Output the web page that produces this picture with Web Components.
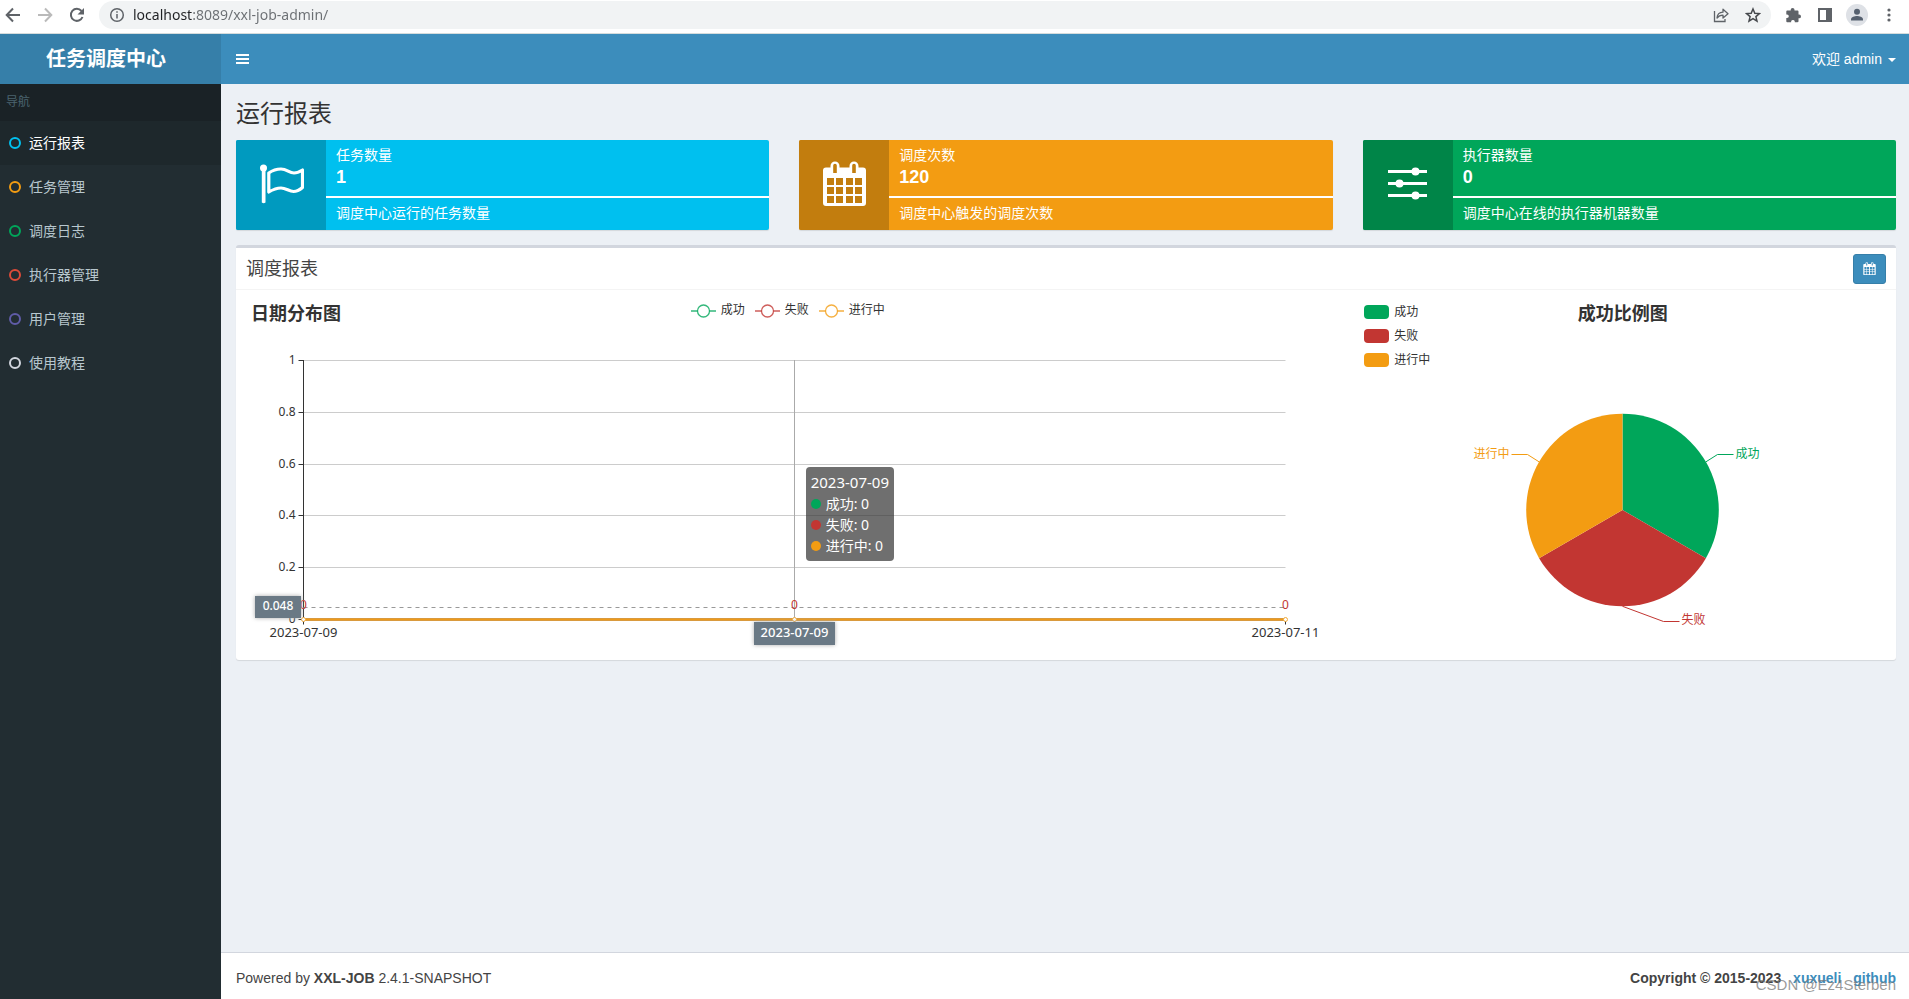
<!DOCTYPE html>
<html lang="zh-CN">
<head>
<meta charset="utf-8">
<title>任务调度中心</title>
<style>
  html, body { margin: 0; height: 100%; }
  body {
    font-family: "Liberation Sans", "Noto Sans CJK SC", sans-serif;
    font-size: 14px; line-height: 20px; color: #333; background: #ecf0f5;
    --cjk: "Noto Sans", "Noto Sans CJK SC", sans-serif;
  }
</style>
</head>
<body>
<app-page>
  <browser-bar slot="browser"></browser-bar>
  <app-header slot="header" brand="任务调度中心" user="欢迎 admin"></app-header>
  <side-nav slot="nav" heading="导航">
    <nav-item color="#00c0ef" active>运行报表</nav-item>
    <nav-item color="#f39c12">任务管理</nav-item>
    <nav-item color="#00a65a">调度日志</nav-item>
    <nav-item color="#dd4b39">执行器管理</nav-item>
    <nav-item color="#605ca8">用户管理</nav-item>
    <nav-item color="#d2d6de">使用教程</nav-item>
  </side-nav>
  <report-view heading="运行报表">
    <info-card slot="cards" icon="flag" color="#00c0ef" dark="#009abf" label="任务数量" value="1">调度中心运行的任务数量</info-card>
    <info-card slot="cards" icon="calendar" color="#f39c12" dark="#c27d0e" label="调度次数" value="120">调度中心触发的调度次数</info-card>
    <info-card slot="cards" icon="sliders" color="#00a65a" dark="#008548" label="执行器数量" value="0">调度中心在线的执行器机器数量</info-card>
    <chart-box heading="调度报表">
      <line-chart heading="日期分布图"></line-chart>
      <pie-chart heading="成功比例图"></pie-chart>
    </chart-box>
  </report-view>
  <app-footer slot="footer"></app-footer>
</app-page>

<script>
const define = (name, html, setup) => {
  const tpl = document.createElement('template');
  tpl.innerHTML = typeof html === 'string' ? html : '';
  customElements.define(name, class extends HTMLElement {
    connectedCallback() {
      if (this.shadowRoot) return;
      const root = this.attachShadow({ mode: 'open' });
      if (typeof html === 'function') root.innerHTML = html(this);
      else root.append(tpl.content.cloneNode(true));
      if (setup) setup(this, root);
    }
  });
};

const cells = [17, 26, 35].map(y => [5, 14, 24, 33].map(x => `M${x} ${y}h7v7h-7z`).join('')).join('');
const ICONS = {
  flag: `<svg viewBox="0 0 45 45" fill="#fff"><circle cx="4.500" cy="7" r="3.500"/><path d="M2.800 8h3.700v33.500q-1.800 1.500-3.700 0z"/><path fill="none" stroke="#fff" stroke-width="3.200" stroke-linejoin="round" d="M9.800 12C14 9 18 8 22 8c6 0 8 4 13 4 3 0 6-1.500 8.500-3v17.500c-3.500 3-6.500 4-9 4-4.500 0-7.500-3.500-12.500-3.500-4 0-8 1.500-12.200 4z"/></svg>`,
  calendar: `<svg viewBox="0 0 45 45" fill="#fff"><path fill-rule="evenodd" d="M4 6.500h4.500V5a4.500 4.500 0 0 1 9 0v1.500h10V5a4.500 4.500 0 0 1 9 0v1.500H41a3 3 0 0 1 3 3V42a3 3 0 0 1-3 3H4a3 3 0 0 1-3-3V9.500a3 3 0 0 1 3-3zM11.200 4.500V12h3.600V4.500a1.500 1.500 0 0 0-3.600 0zM30.200 4.500V12h3.600V4.500a1.500 1.500 0 0 0-3.600 0z${cells}"/></svg>`,
  sliders: `<svg viewBox="0 0 45 45" fill="#fff"><path d="M3 9h39v3H3zM3 21h39v3H3zM3 33h39v3H3z"/><circle cx="30.500" cy="10.500" r="4"/><circle cx="14.500" cy="22.500" r="4"/><circle cx="30.500" cy="34.500" r="4"/></svg>`
};
const SERIES = [['成功', '#00a65a'], ['失败', '#c23632'], ['进行中', '#f39c12']];

define('app-page', `
<style>
  :host { display: flex; flex-direction: column; min-height: 100vh; }
  .body { flex: 1; display: grid; grid-template-columns: 221px minmax(0, 1fr); }
  aside { background: #222d32; }
  main { display: flex; flex-direction: column; }
  .content { flex: 1; }
</style>
<slot name="browser"></slot>
<slot name="header"></slot>
<div class="body">
  <aside><slot name="nav"></slot></aside>
  <main><div class="content"><slot></slot></div><slot name="footer"></slot></main>
</div>`);

define('browser-bar', `
<style>
  :host { display: flex; gap: 16px; height: 32px; padding: 1px 12px 0 5px; background: #fff; border-bottom: 1px solid #d5dcdc; align-items: flex-start; }
  button { width: 16px; height: 28px; padding: 0; border: 0; background: none; display: flex; align-items: center; justify-content: center; flex: none; }
  svg { flex: none; display: block; width: 16px; height: 16px; }
  .avatar svg { width: 22px; height: 22px; }
  form { flex: 1; margin: 0 -2px; height: 28px; border-radius: 14px; background: #f1f3f4; display: flex; align-items: center; padding: 0 10px; gap: 16px; }
  input { flex: 1; min-width: 0; margin-left: -8px; height: 28px; padding: 0; border: 0; outline: 0; color: #5f6368;
    font: 14px/28px var(--cjk);
    background: linear-gradient(90deg, #202124 60px, #6b6f73 60px); background-clip: text; -webkit-background-clip: text; -webkit-text-fill-color: transparent; }
</style>
<button aria-label="后退"><svg viewBox="0 0 16 16" fill="none" stroke="#5f6368" stroke-width="2"><path d="M15 8H2M8 1.500L1.700 8 8 14.500"/></svg></button>
<button aria-label="前进"><svg viewBox="0 0 16 16" fill="none" stroke="#bababa" stroke-width="2"><path d="M1 8h13M8 1.500L14.300 8 8 14.500"/></svg></button>
<button aria-label="刷新"><svg viewBox="0 0 16 16" fill="none" stroke="#5f6368" stroke-width="2"><path d="M13.500 10A6 6 0 1 1 12.500 4"/><path fill="#5f6368" stroke="none" d="M15 1v6.500H8.500z"/></svg></button>
<form onsubmit="return false">
  <svg viewBox="0 0 16 16" fill="none" stroke="#5f6368" stroke-width="1.500"><circle cx="8" cy="8" r="6.300"/><path d="M8 7v4.500M8 4.200v1.600"/></svg>
  <input aria-label="地址" value="localhost:8089/xxl-job-admin/">
  <button type="button" aria-label="分享"><svg viewBox="0 0 16 16" fill="none" stroke="#5f6368" stroke-width="1.300"><path d="M1.500 4v10.500h10.500V12"/><path stroke-linejoin="round" d="M4 11c.3-4 2.500-5.700 6-5.800V2.200L15 6.800 10 11V8.200C7.500 8.200 5.500 9 4 11z"/></svg></button>
  <button type="button" aria-label="收藏"><svg viewBox="0 0 16 16" fill="none" stroke="#46494d" stroke-width="1.500"><path d="M8 2l1.800 4.200 4.600.4-3.500 3 1.100 4.500L8 11.700l-4 2.400 1.100-4.500-3.500-3 4.600-.4z"/></svg></button>
</form>
<button aria-label="扩展程序"><svg viewBox="0 0 16 16" fill="#5f6368"><path d="M2.200 3.600h3.500V2.800a1.900 1.900 0 0 1 3.800 0v.8h3.100c.5 0 .9.400.9.900v3h.6a1.900 1.900 0 0 1 0 3.800h-.6v3c0 .5-.4.900-.9.900H9.800v-.7a1.900 1.900 0 0 0-3.700 0v.7H2.200c-.5 0-.9-.4-.9-.9v-3.200H2a1.800 1.800 0 0 0 0-3.600h-.7v-3c0-.5.400-.9.900-.9z"/></svg></button>
<button aria-label="侧边栏"><svg viewBox="0 0 16 16"><path fill="#5f6368" fill-rule="evenodd" d="M1 1h14v14H1zM3 3v10h6V3z"/></svg></button>
<button class="avatar" aria-label="账号"><svg viewBox="0 0 22 22"><circle cx="11" cy="11" r="11" fill="#dee1e6"/><g fill="#55606f"><circle cx="11" cy="7.800" r="3"/><path d="M5 16.500v-1.300c0-2.300 3.800-3.200 6-3.200s6 .9 6 3.200v1.300z"/></g></svg></button>
<button aria-label="菜单"><svg viewBox="0 0 16 16" fill="#5f6368"><circle cx="8" cy="3" r="1.600"/><circle cx="8" cy="8" r="1.600"/><circle cx="8" cy="13" r="1.600"/></svg></button>`);

define('app-header', el => `
<style>
  :host { display: flex; height: 50px; background: #3c8dbc; color: #fff; }
  .brand { box-sizing: border-box; width: 221px; padding: 0 15px 0 6px; background: #367fa9; color: #fff; font-size: 20px; line-height: 50px; font-weight: 700; text-align: center; text-decoration: none; }
  nav { flex: 1; display: flex; justify-content: space-between; padding: 0 13px 0 15px; }
  button { display: flex; align-items: center; border: 0; padding: 0; background: none; color: inherit; font: inherit; }
  .caret { border: 4px solid transparent; border-top-color: #fff; border-bottom: 0; margin: 2px 0 0 6px; }
</style>
<a class="brand" href="#">${el.getAttribute('brand')}</a>
<nav>
  <button aria-label="切换导航"><svg width="13" height="10" viewBox="0 0 13 10" fill="#fff"><path d="M0 0h13v2H0zM0 4h13v2H0zM0 8h13v2H0z"/></svg></button>
  <button>${el.getAttribute('user')}<span class="caret"></span></button>
</nav>`);

define('side-nav', el => `
<style>
  :host { display: block; }
  .head { height: 37px; padding-left: 6px; background: #1a2226; color: #4b646f; font-size: 12px; line-height: 37px; }
</style>
<div class="head">${el.getAttribute('heading')}</div>
<nav><slot></slot></nav>`);

define('nav-item', el => `
<style>
  :host { display: block; }
  a { display: flex; align-items: center; gap: 8px; height: 44px; padding-left: 9px; color: #b8c7ce; text-decoration: none; }
  :host([active]) a { background: #1e282c; color: #fff; }
  i { width: 8px; height: 8px; border: 2px solid ${el.getAttribute('color')}; border-radius: 50%; }
</style>
<a href="#"><i></i><span><slot></slot></span></a>`);

define('report-view', el => `
<style>
  :host { display: block; padding: 16px 13px 0 15px; }
  h1 { margin: 0 0 12px; font-size: 24px; line-height: 28px; font-weight: 400; }
  .cards { display: grid; grid-template-columns: repeat(3, minmax(0, 1fr)); gap: 30px; margin-bottom: 15px; }
</style>
<h1>${el.getAttribute('heading')}</h1>
<div class="cards"><slot name="cards"></slot></div>
<slot></slot>`);

define('info-card', el => `
<style>
  :host { display: grid; grid-template-columns: 90px 1fr; height: 90px; border-radius: 2px; overflow: hidden; box-shadow: 0 1px 1px rgba(0,0,0,.1); background: ${el.getAttribute('color')}; color: #fff; }
  .icon { background: ${el.getAttribute('dark')}; display: flex; align-items: center; justify-content: center; padding-bottom: 3px; }
  svg { width: 45px; height: 45px; }
  .text { padding: 5px 0; }
  .text > * { display: block; padding: 0 10px; line-height: 20px; }
  .text strong { font-size: 18px; line-height: 24px; }
  .text hr { height: 2px; padding: 0; margin: 7px 0 5px; border: 0; background: #fff; }
</style>
<div class="icon">${ICONS[el.getAttribute('icon')]}</div>
<div class="text"><span>${el.getAttribute('label')}</span><strong>${el.getAttribute('value')}</strong><hr><span><slot></slot></span></div>`);

define('chart-box', el => `
<style>
  :host { display: block; background: #fff; border-top: 3px solid #d2d6de; border-radius: 3px; box-shadow: 0 1px 1px rgba(0,0,0,.1); }
  header { display: flex; align-items: center; justify-content: space-between; height: 41px; padding: 0 10px; border-bottom: 1px solid #f4f4f4; }
  h3 { margin: 0; font-size: 18px; font-weight: 400; color: #444; }
  button { width: 33px; height: 30px; padding: 0; border: 1px solid #367fa9; border-radius: 3px; background: #3c8dbc; display: flex; align-items: center; justify-content: center; }
  button svg { width: 13px; height: 13px; }
  .charts { display: grid; grid-template-columns: calc((100% + 30px) * 2 / 3 - 30px) minmax(0, 1fr); gap: 30px; padding: 10px; }
</style>
<header><h3>${el.getAttribute('heading')}</h3><button aria-label="选择日期">${ICONS.calendar}</button></header>
<div class="charts"><slot></slot></div>`);

const CHART_STYLE = `
  :host { display: grid; position: relative; height: 350px; font: 12px/14px var(--cjk); color: #333; }
  :host > * { grid-area: 1 / 1; }
  svg.plot { display: block; width: 100%; height: 350px; overflow: visible; }
  svg text { font-size: 12px; fill: #333; }
  svg .date { font-size: 13px; }
  h4 { margin: 0; padding: 4px 5px; font-size: 18px; line-height: 18px; height: 18px; font-weight: 700; }
  ul { list-style: none; margin: 0; padding: 3px 5px; display: flex; gap: 10px; align-self: start; }
  li { display: flex; gap: 5px; align-items: center; }
`;

/* Redraws the plot whenever the element's width changes. */
const autoDraw = (el, root, draw) => {
  const svg = root.querySelector('svg.plot');
  const paint = () => { svg.innerHTML = draw(el.clientWidth); };
  paint();
  new ResizeObserver(paint).observe(el);
};

define('line-chart', el => `
<style>${CHART_STYLE}
  ul { justify-self: center; }
  li svg { overflow: visible; }
  .tip { position: absolute; left: calc(50% + 18px); top: 167px; box-sizing: border-box; width: 88px; padding: 5px; border-radius: 4px; background: rgba(50,50,50,.7); color: #fff; font-size: 14px; line-height: 21px; white-space: nowrap; }
  .tip .date { font-size: 15px; }
  .tip div { display: flex; align-items: center; gap: 5px; }
  .tip i { width: 10px; height: 10px; border-radius: 50%; }
</style>
<svg class="plot"></svg>
<h4>${el.getAttribute('heading')}</h4>
<ul>${SERIES.map(([n, c]) => `<li><svg width="25" height="14" viewBox="0 0 25 14" fill="#fff" stroke="${c}" stroke-opacity=".8"><path d="M0 8h25" stroke-width="1.500"/><circle cx="12.500" cy="8" r="6" stroke-width="1.300"/></svg><span>${n}</span></li>`).join('')}</ul>
<div class="tip"><span class="date">2023-07-09</span>${SERIES.map(([n, c]) => `<div><i style="background:${c}"></i><span>${n}: 0</span></div>`).join('')}</div>`,
(el, root) => autoDraw(el, root, w => {
  const left = 57.5, right = Math.round(w * 0.96) - 0.5, mid = Math.floor((left + right) / 2) + 0.5, base = 319.5;
  const ys = [60.5, 112.5, 164.5, 215.5, 267.5, base];
  const names = ['1', '0.8', '0.6', '0.4', '0.2', '0'];
  let s = '';
  ys.forEach((y, i) => {
    if (y < base) s += `<path d="M${left} ${y}H${right}" stroke="#ccc"/>`;
    s += `<path d="M${left - 5} ${y}H${left}" stroke="#333"/><text x="${left - 8}" y="${y + 3}" text-anchor="end">${names[i]}</text>`;
  });
  s += `<path d="M${left} 60V${base + 5}M${mid} ${base}v5M${right} ${base}v5" stroke="#333"/>`;
  s += `<path d="M${left} 307.500H${right}" stroke="#999" stroke-dasharray="4 4"/>`;
  s += `<path d="M${mid} 60V${base}" stroke="#aaa"/>`;
  s += `<path d="M${left} ${base}H${right}" stroke="#d99a3e" stroke-width="3"/><path d="M${left} ${base}H${right}" stroke="#ee9a1a"/>`;
  [left, mid, right].forEach(x => {
    s += `<circle cx="${x}" cy="${base}" r="2" fill="#fff" stroke="#f0a93a"/><text x="${x}" y="309" text-anchor="middle" style="fill:#c23632">0</text>`;
  });
  s += `<text class="date" x="${left}" y="337" text-anchor="middle">2023-07-09</text><text class="date" x="${right}" y="337" text-anchor="middle">2023-07-11</text>`;
  const shadow = 'style="filter:drop-shadow(0 0 2px #aaa)"';
  s += `<rect x="9" y="296" width="46" height="22" fill="#6a7985" ${shadow}/><text x="32" y="310" text-anchor="middle" style="fill:#fff;font-weight:500">0.048</text>`;
  s += `<rect x="${mid - 40.5}" y="322" width="81" height="23" fill="#6a7985" ${shadow}/><text class="date" x="${mid}" y="337" text-anchor="middle" style="fill:#fff;font-weight:500">2023-07-09</text>`;
  return s;
}));

define('pie-chart', el => `
<style>${CHART_STYLE}
  h4 { justify-self: center; }
  ul { flex-direction: column; padding: 5px; }
  i { width: 25px; height: 14px; border-radius: 4px; }
</style>
<svg class="plot"></svg>
<h4>${el.getAttribute('heading')}</h4>
<ul>${SERIES.map(([n, c]) => `<li><i style="background:${c}"></i><span>${n}</span></li>`).join('')}</ul>`,
(el, root) => autoDraw(el, root, w => {
  const cx = w / 2, cy = 210, r = 96.3;
  const at = deg => { const a = (deg - 90) * Math.PI / 180; return `${cx + r * Math.cos(a)} ${cy + r * Math.sin(a)}`; };
  let s = SERIES.map(([, c], i) => `<path fill="${c}" d="M${cx} ${cy}L${at(i * 120)}A${r} ${r} 0 0 1 ${at(i * 120 + 120)}z"/>`).join('');
  const label = (c, deg, pts, x, y, anchor, name) =>
    `<path fill="none" stroke="${c}" d="M${at(deg)}L${pts}"/><text x="${x}" y="${y}" text-anchor="${anchor}" style="fill:${c}">${name}</text>`;
  s += label('#00a65a', 60, `${cx + 95} 154.500H${cx + 111}`, cx + 113, 158, 'start', '成功');
  s += label('#c23632', 180, `${cx + 41} 321.500H${cx + 57}`, cx + 59, 324, 'start', '失败');
  s += label('#f39c12', 300, `${cx - 95} 154.500H${cx - 111}`, cx - 113, 158, 'end', '进行中');
  return s;
}));

define('app-footer', `
<style>
  :host { position: relative; display: flex; justify-content: space-between; padding: 15px 13px 11px 15px; background: #fff; border-top: 1px solid #d2d6de; color: #444; }
  a { color: #3c8dbc; text-decoration: none; margin-left: 8px; }
  .mark { position: absolute; right: 13px; top: 21px; font: 15px/22px "Liberation Sans", sans-serif; color: rgba(120,120,120,.75); white-space: nowrap; pointer-events: none; }
</style>
<span>Powered by <b>XXL-JOB</b> 2.4.1-SNAPSHOT</span>
<b>Copyright © 2015-2023 <a href="#">xuxueli</a> <a href="#">github</a></b>
<span class="mark">CSDN @Ez4Sterben</span>`);
</script>
</body>
</html>
